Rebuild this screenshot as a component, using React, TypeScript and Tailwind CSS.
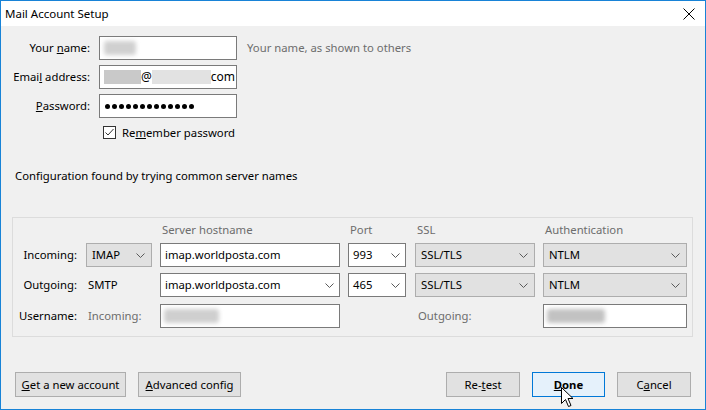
import React from "react";

const Chevron = () => (
  <svg width="9" height="5" viewBox="0 0 9 5" className="shrink-0">
    <path d="M0.5 0.5 L4.5 4.5 L8.5 0.5" fill="none" stroke="#5a5a5a" strokeWidth="1" />
  </svg>
);

const Blur = ({ w, c = "#c4c4c4" }: { w: number; c?: string }) => (
  <div className="h-[14px] rounded-[3px] blur-[2px]" style={{ width: w, background: c }} />
);

const GraySelect = ({ text, w }: { text: string; w: string }) => (
  <div className={`${w} h-[24px] border border-[#adadad] bg-[#e1e1e1] flex items-center justify-between pl-[5px] pr-[6px]`}>
    <span>{text}</span>
    <Chevron />
  </div>
);

const Btn = ({ children, w }: { children: React.ReactNode; w: string }) => (
  <div className={`${w} h-[25px] border border-[#adadad] bg-[#e1e1e1] flex items-center justify-center`}>
    {children}
  </div>
);

export default function App() {
  return (
    <div className="w-[706px] h-[410px] border border-[#1883d7] bg-[#f0f0f0] flex flex-col text-[11.3px] text-black font-['Noto_Sans',sans-serif] leading-[16px]">
      {/* Title bar */}
      <div className="h-[25px] bg-white flex items-center justify-between pl-[4px] pr-[10px] shrink-0">
        <span className="text-[11.5px]">Mail Account Setup</span>
        <svg width="12" height="12" viewBox="0 0 12 12">
          <path d="M0.5 0.5 L11.5 11.5 M11.5 0.5 L0.5 11.5" stroke="#000" strokeWidth="1" />
        </svg>
      </div>

      {/* Body */}
      <div className="flex-1 flex flex-col">
        <div className="mt-[10px] flex flex-col gap-[5px]">
          <div className="flex items-center h-[24px]">
            <div className="w-[89px] text-right">
              Your <u>n</u>ame:
            </div>
            <div className="ml-[9px] w-[138px] h-[24px] bg-white border border-[#7a7a7a] flex items-center pl-[4px]">
              <Blur w={32} c="#d0d0d0" />
            </div>
            <div className="ml-[10px] text-[#6d6d6d]">Your name, as shown to others</div>
          </div>
          <div className="flex items-center h-[24px]">
            <div className="w-[89px] text-right">
              Emai<u>l</u> address:
            </div>
            <div className="ml-[9px] w-[138px] h-[24px] bg-white border border-[#7a7a7a] flex items-center pl-[4px] text-[12px]">
              <div className="w-[37px] h-[14px] bg-[#c9c9c9]" />
              <span>@</span>
              <div className="w-[59px] h-[14px] bg-[#e2e2e2]" />
              <span>com</span>
            </div>
          </div>
          <div className="flex items-center h-[24px]">
            <div className="w-[89px] text-right">
              <u>P</u>assword:
            </div>
            <div className="ml-[9px] w-[138px] h-[24px] bg-white border border-[#7a7a7a] flex items-center pl-[5px] gap-[2px]">
              {Array.from({ length: 13 }).map((_, i) => (
                <div key={i} className="w-[5px] h-[5px] rounded-full bg-black" />
              ))}
            </div>
          </div>
          <div className="flex items-center h-[13px] mt-[3px]">
            <div className="ml-[102px] w-[13px] h-[13px] border border-[#333] bg-white flex items-center justify-center">
              <svg width="11" height="11" viewBox="0 0 11 11">
                <path d="M1.5 5.5 L4 8 L9.5 2" fill="none" stroke="#333" strokeWidth="1" />
              </svg>
            </div>
            <span className="ml-[6px]">
              Re<u>m</u>ember password
            </span>
          </div>
        </div>

        <div className="mt-[29px] ml-[14px]">Configuration found by trying common server names</div>

        {/* Group box */}
        <div className="mt-[33px] ml-[11px] w-[681px] h-[120px] border border-[#dcdcdc] pt-[4px]">
          <div className="grid grid-cols-[73px_74px_188px_67px_128px_144px] items-center">
            <div />
            <div />
            <div className="pl-[2px] text-[#6d6d6d]">Server hostname</div>
            <div className="pl-[2px] text-[#6d6d6d]">Port</div>
            <div className="pl-[2px] text-[#6d6d6d]">SSL</div>
            <div className="pl-[2px] text-[#6d6d6d]">Authentication</div>
          </div>
          <div className="mt-[5px] grid grid-cols-[73px_74px_188px_67px_128px_144px] items-center">
            <div className="text-right pr-[9px]">Incoming:</div>
            <GraySelect text="IMAP" w="w-[66px]" />
            <div className="w-[180px] h-[24px] bg-white border border-[#7a7a7a] flex items-center pl-[4px]">
              imap.worldposta.com
            </div>
            <div className="w-[58px] h-[24px] bg-white border border-[#7a7a7a] flex items-center justify-between pl-[4px] pr-[5px]">
              <span>993</span>
              <Chevron />
            </div>
            <GraySelect text="SSL/TLS" w="w-[120px]" />
            <GraySelect text="NTLM" w="w-[144px]" />
          </div>
          <div className="mt-[6px] grid grid-cols-[73px_74px_188px_67px_128px_144px] items-center">
            <div className="text-right pr-[9px]">Outgoing:</div>
            <div className="pl-[2px]">SMTP</div>
            <div className="w-[180px] h-[24px] bg-white border border-[#7a7a7a] flex items-center justify-between pl-[4px] pr-[5px]">
              <span>imap.worldposta.com</span>
              <Chevron />
            </div>
            <div className="w-[58px] h-[24px] bg-white border border-[#7a7a7a] flex items-center justify-between pl-[4px] pr-[5px]">
              <span>465</span>
              <Chevron />
            </div>
            <GraySelect text="SSL/TLS" w="w-[120px]" />
            <GraySelect text="NTLM" w="w-[144px]" />
          </div>
          <div className="mt-[7px] grid grid-cols-[73px_74px_188px_67px_128px_144px] items-center">
            <div className="text-right pr-[9px]">Username:</div>
            <div className="pl-[2px] text-[#6d6d6d]">Incoming:</div>
            <div className="w-[180px] h-[24px] bg-white border border-[#7a7a7a] flex items-center pl-[3px]">
              <Blur w={55} c="#cfcfcf" />
            </div>
            <div />
            <div className="pl-[3px] text-[#6d6d6d]">Outgoing:</div>
            <div className="w-[144px] h-[24px] bg-white border border-[#7a7a7a] flex items-center pl-[3px]">
              <Blur w={58} c="#c2c2c2" />
            </div>
          </div>
        </div>

        {/* Buttons */}
        <div className="mt-auto mb-[12px] flex items-center px-[14px]">
          <Btn w="w-[111px]">
            <span>
              <u>G</u>et a new account
            </span>
          </Btn>
          <div className="ml-[12px]">
            <Btn w="w-[103px]">
              <span>
                <u>A</u>dvanced config
              </span>
            </Btn>
          </div>
          <div className="ml-auto">
            <Btn w="w-[74px]">
              <span>
                Re-<u>t</u>est
              </span>
            </Btn>
          </div>
          <div className="ml-[12px] relative w-[73px] h-[25px] border border-[#0078d7] bg-[#e5f1fb] flex items-center justify-center font-bold">
            <span>
              <u>D</u>one
            </span>
            <svg
              className="absolute left-[28px] top-[14px]"
              width="13"
              height="21"
              viewBox="0 0 13 21"
            >
              <path
                d="M0.5 0.5 L0.5 16.5 L4.5 12.5 L7.5 19.5 L10 18.5 L7 11.5 L12 11.5 Z"
                fill="#fff"
                stroke="#000"
                strokeWidth="1"
                strokeLinejoin="miter"
              />
            </svg>
          </div>
          <div className="ml-[12px]">
            <Btn w="w-[74px]">
              <span>
                C<u>a</u>ncel
              </span>
            </Btn>
          </div>
        </div>
      </div>
    </div>
  );
}
